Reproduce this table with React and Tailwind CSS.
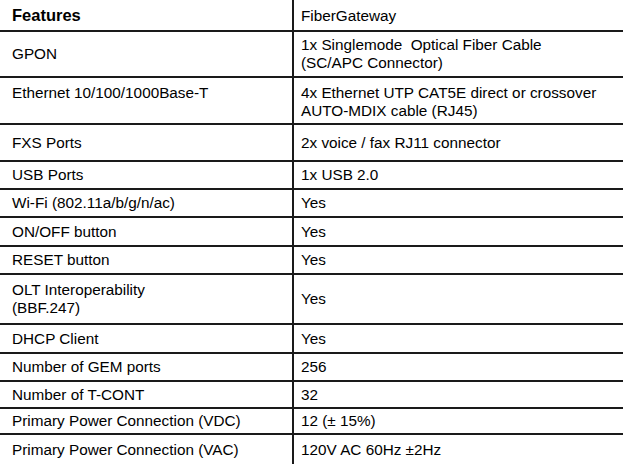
import React from "react";

const rows = [
  { h: "h-[46px]", l: ["GPON"], r: ["1x Singlemode  Optical Fiber Cable", "(SC/APC Connector)"] },
  { h: "h-[47px]", l: ["Ethernet 10/100/1000Base-T"], r: ["4x Ethernet UTP CAT5E direct or crossover", "AUTO-MDIX cable (RJ45)"], top: true },
  { h: "h-[37px]", l: ["FXS Ports"], r: ["2x voice / fax RJ11 connector"] },
  { h: "h-[28px]", l: ["USB Ports"], r: ["1x USB 2.0"] },
  { h: "h-[28px]", l: ["Wi-Fi (802.11a/b/g/n/ac)"], r: ["Yes"] },
  { h: "h-[29px]", l: ["ON/OFF button"], r: ["Yes"] },
  { h: "h-[28px]", l: ["RESET button"], r: ["Yes"] },
  { h: "h-[50px]", l: ["OLT Interoperability", "(BBF.247)"], r: ["Yes"] },
  { h: "h-[29px]", l: ["DHCP Client"], r: ["Yes"] },
  { h: "h-[28px]", l: ["Number of GEM ports"], r: ["256"] },
  { h: "h-[27px]", l: ["Number of T-CONT"], r: ["32"] },
  { h: "h-[26px]", l: ["Primary Power Connection (VDC)"], r: ["12 (± 15%)"] },
  { h: "h-[29px]", l: ["Primary Power Connection (VAC)"], r: ["120V AC 60Hz ±2Hz"], last: true },
];

function Lines({ items }) {
  return (
    <div className="leading-[18px]">
      {items.map((t, i) => (
        <div key={i} className="whitespace-pre">{t}</div>
      ))}
    </div>
  );
}

export default function App() {
  return (
    <div className="bg-white w-[636px] h-[471px] text-black text-[15.3px]" style={{ fontFamily: '"Liberation Sans", Arial, sans-serif' }}>
      <div className="w-[623px]">
        <div className="flex h-[32px] border-b-2 border-[#1a1a1a]">
          <div className="w-[294px] border-r-2 border-[#1a1a1a] pl-[12px] pt-[1px] flex items-center font-bold text-[16.5px]">Features</div>
          <div className="flex-1 pl-[7px] pt-[2px] flex items-center">FiberGateway</div>
        </div>
        {rows.map((r, i) => (
          <div key={i} className={`flex ${r.h} ${r.last ? "" : "border-b-2 border-[#1a1a1a]"}`}>
            <div className={`w-[294px] border-r-2 border-[#1a1a1a] pl-[12px] flex ${r.top ? "items-start pt-[6px]" : "items-center"}`}>
              <Lines items={r.l} />
            </div>
            <div className={`flex-1 pl-[7px] flex ${r.top ? "items-start pt-[6px]" : "items-center"}`}>
              <Lines items={r.r} />
            </div>
          </div>
        ))}
      </div>
    </div>
  );
}
